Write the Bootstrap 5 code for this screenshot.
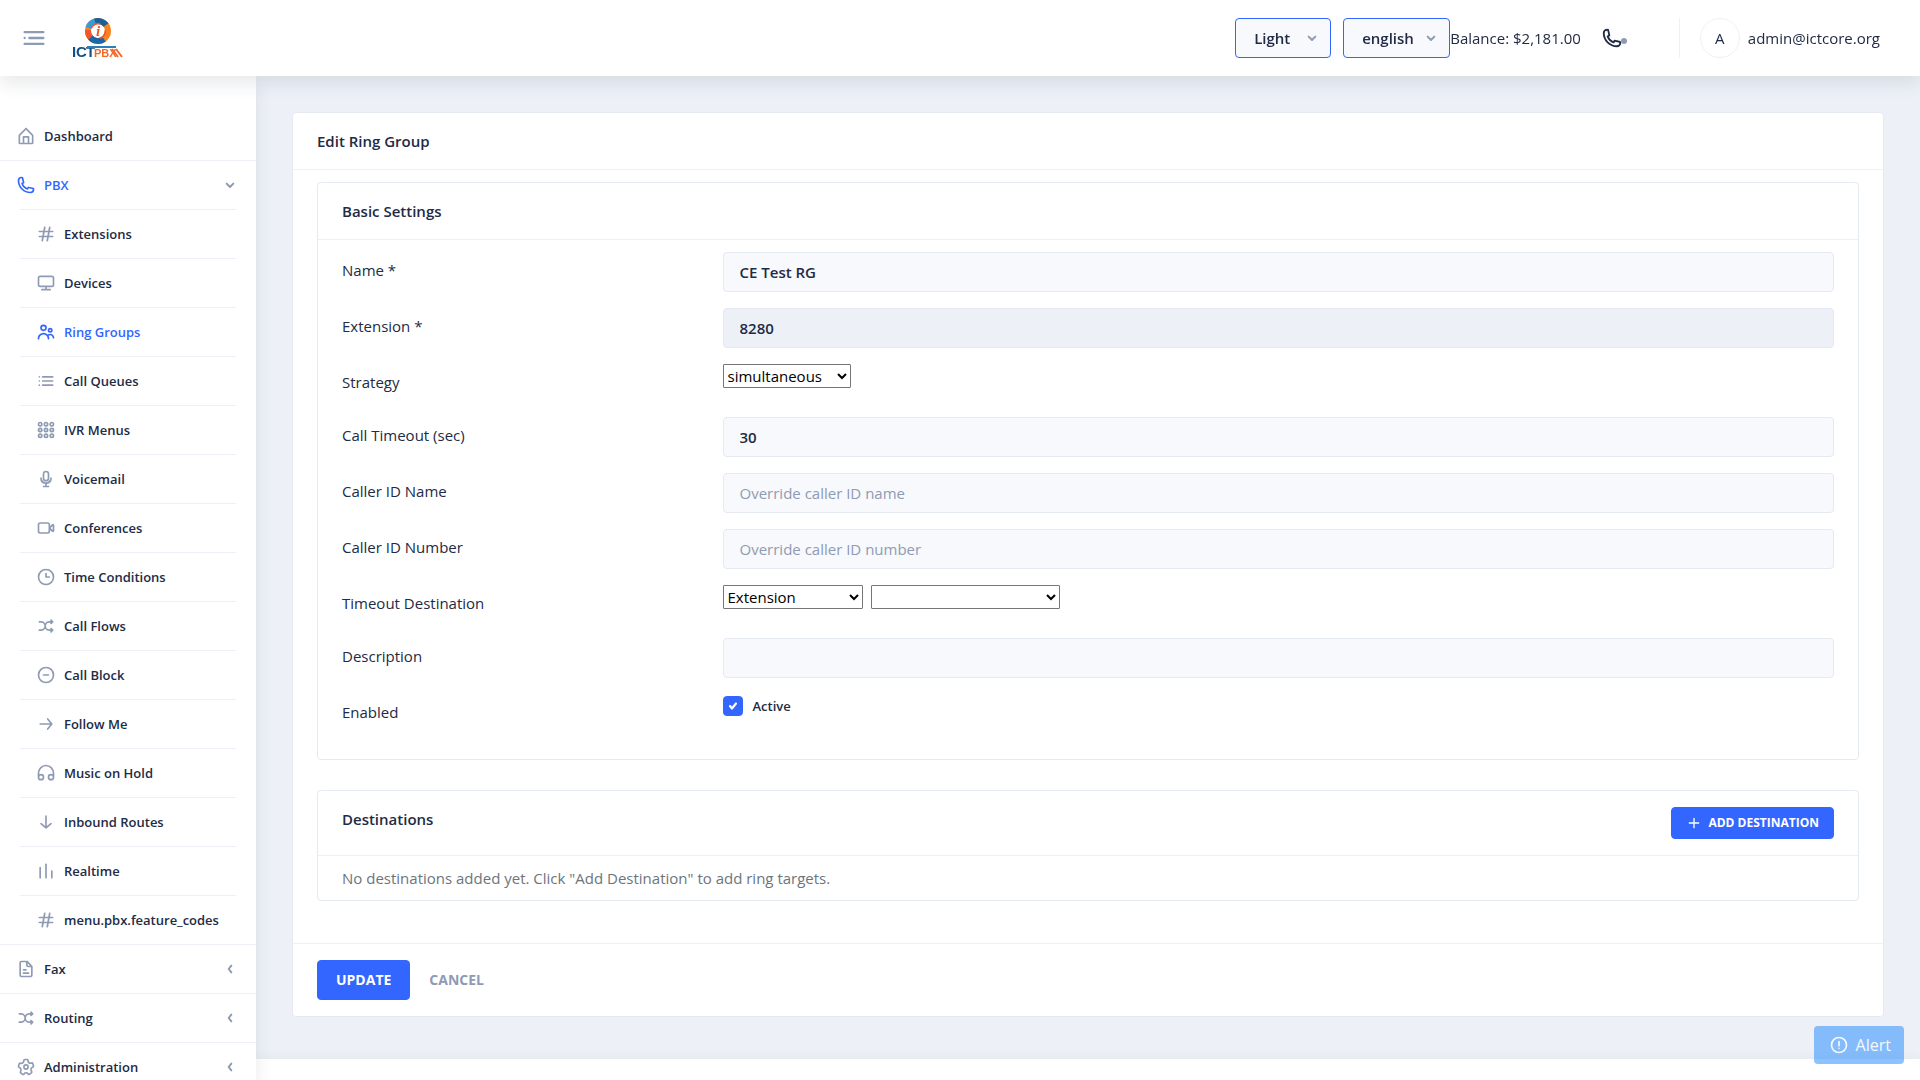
<!DOCTYPE html>
<html lang="en">
<head>
<meta charset="utf-8">
<meta name="viewport" content="width=device-width, initial-scale=1">
<title>ICTPBX - Edit Ring Group</title>
<link href="https://cdn.jsdelivr.net/npm/bootstrap@5.3.0/dist/css/bootstrap.min.css" rel="stylesheet">
<style>
:root{--ink:#222b45;--hint:#8f9bb3;--brand:#3366ff;--line:#edf1f7;--edge:#e4e9f2;--field:#f7f9fc}
body{font-family:"Open Sans","Noto Sans",sans-serif;font-size:15px;line-height:20px;color:var(--ink)}
a{text-decoration:none}
.ico{width:20px;height:20px;fill:currentColor;flex:none}
.ico-sm{width:16px;height:16px}
.ico-md{width:22px;height:22px}
.ico-lg{width:28px;height:28px}
.topbar{height:76px;padding:0 40px 0 20px;box-shadow:0 8px 16px 0 rgba(44,51,73,.1);z-index:10}
.plain-btn{border:0;background:none;padding:0;color:var(--hint);line-height:0}
.brand-logo{width:52px;height:44px;margin-left:24px}
.top-select{height:40px;width:auto;font-size:15px;font-weight:600;line-height:24px;color:var(--ink);border:1px solid var(--brand);border-radius:4px;padding:0 34px 0 18px;background-color:var(--field);background-size:16px 16px;background-position:right 10px center;
background-image:url("data:image/svg+xml,%3Csvg xmlns='http://www.w3.org/2000/svg' viewBox='0 0 24 24'%3E%3Cpath d='M7 10l5 5 5-5' fill='none' stroke='%238f9bb3' stroke-width='3' stroke-linecap='round' stroke-linejoin='round'/%3E%3C/svg%3E")}
.theme-select{width:96px}
.lang-select{width:107px}
.phone-btn{color:var(--ink);margin-left:20px}
.phone-dot{width:6px;height:6px;background:var(--hint);right:-4px;bottom:5px}
.user-box{height:40px;margin-left:56px;padding-left:20px;border-left:1px solid var(--line)}
.avatar{width:40px;height:40px;border:1px solid var(--line)}
.sidebar{width:256px;padding-top:36px;z-index:5;box-shadow:0 8px 16px 0 rgba(44,51,73,.1);scrollbar-width:none}
.side-menu li{border-bottom:1px solid var(--line)}
.side-menu li:last-child{border-bottom:0}
.side-menu a{display:flex;align-items:center;gap:8px;padding:12px 16px;font-size:13px;font-weight:600;line-height:24px;color:var(--ink)}
.side-menu a .ico{color:var(--hint)}
.side-menu a .ico-sm{margin-left:auto;margin-right:2px}
.side-menu a.current,.side-menu a.current .ico:first-child{color:var(--brand)}
.sub-menu{margin:0 20px;border-top:1px solid var(--line)}
.content-pane{background:#edf1f7;scrollbar-width:none}
.page-body{padding:36px 36px 42px}
.page-foot{height:84px;background:#fff;flex:none;box-shadow:0 -4px 8px 0 rgba(44,51,73,.03)}
.panel{border:1px solid var(--edge);border-radius:4px}
.panel>.card-header{background:none;border-bottom:1px solid var(--line);padding:16px 24px;font-weight:600;line-height:24px}
.panel>.card-body{padding:12px 24px}
.panel>.card-footer{background:none;border-top:1px solid var(--line);padding:16px 24px}
.inner-panel{margin-bottom:30px}
.form-line{--bs-gutter-x:30px;margin-bottom:16px}
.form-line .col-form-label{padding-top:7px;padding-bottom:7px;line-height:23px}
.field{height:40px;border:1px solid var(--edge);border-radius:4px;background:var(--field);padding:7px 16px;font-size:15px;font-weight:600;line-height:24px;color:var(--ink)}
.field::placeholder{color:var(--hint);font-weight:400;opacity:1}
.field:disabled{background:#edf1f7;color:var(--ink);opacity:1}
.plain-select{height:24px;font-size:15px;line-height:20px;color:#000;background:#fff;border:1px solid #767676;border-radius:1px;padding-right:5px;vertical-align:top}
.w-strategy{width:128px}
.w-kind{width:140px}
.w-target{width:189px}
.tick-line{padding-top:2px}
.tick{width:20px;height:20px;border-radius:3px;background-size:18px 18px}
.tick.form-check-input{margin:0}
.tick:checked{background-color:var(--brand);border-color:var(--brand);background-image:url("data:image/svg+xml,%3Csvg xmlns='http://www.w3.org/2000/svg' viewBox='0 0 18 18'%3E%3Cpath d='M6 9l2 2.500L12 6.500' fill='none' stroke='white' stroke-width='2.200' stroke-linecap='round' stroke-linejoin='round'/%3E%3C/svg%3E")}
.tick-text{font-size:13px;font-weight:600;padding-left:10px}
.btn-act{font-weight:700;border-radius:4px;text-transform:uppercase;border-width:1px}
.btn-main{--bs-btn-color:#fff;--bs-btn-bg:#3366ff;--bs-btn-border-color:#3366ff;--bs-btn-hover-color:#fff;--bs-btn-hover-bg:#598bff;--bs-btn-hover-border-color:#598bff}
.btn-mid{font-size:14px;line-height:16px;padding:11px 18px}
.btn-tiny{font-size:12px;line-height:16px;padding:7px 14px;gap:6px}
.btn-ghost{color:var(--hint)}
.muted-note{color:#6c757d}
.alert-btn{right:16px;bottom:16px;height:38px;font-size:16px;line-height:24px;padding:6px 13px 6px 15px;gap:7px;border:0;border-radius:4px;color:#fff;background:#1a86ff;opacity:.5;z-index:20}
</style>
<script src="https://cdn.jsdelivr.net/npm/bootstrap@5.3.0/dist/js/bootstrap.bundle.min.js"></script>
</head>
<body class="vh-100 d-flex flex-column overflow-hidden bg-white">

<svg class="d-none" xmlns="http://www.w3.org/2000/svg">
<symbol id="i-menu" viewBox="0 0 24 24"><circle cx="4" cy="12" r="1"/><rect x="7" y="11" width="14" height="2" rx=".94"/><rect x="3" y="16" width="18" height="2" rx=".94"/><rect x="3" y="6" width="18" height="2" rx=".94"/></symbol>
<symbol id="i-home" viewBox="0 0 24 24"><path d="M20.420 10.180L12.710 2.300a1 1 0 0 0-1.420 0l-7.710 7.890A2 2 0 0 0 3 11.620V20a2 2 0 0 0 1.890 2h14.220A2 2 0 0 0 21 20v-8.380a2.070 2.070 0 0 0-.58-1.440zM10 20v-6h4v6zm9 0h-3v-7a1 1 0 0 0-1-1H9a1 1 0 0 0-1 1v7H5v-8.420l7-7.150 7 7.190z"/></symbol>
<symbol id="i-phone" viewBox="0 0 24 24"><path d="M17.400 22A15.420 15.420 0 0 1 2 6.600 4.600 4.600 0 0 1 6.600 2a3.940 3.940 0 0 1 .77.070 3.790 3.790 0 0 1 .72.180 1 1 0 0 1 .65.750l1.370 6a1 1 0 0 1-.26.920c-.13.140-.14.150-1.370.790a9.910 9.910 0 0 0 4.870 4.890c.65-1.240.66-1.250.8-1.380a1 1 0 0 1 .92-.26l6 1.370a1 1 0 0 1 .72.650 4.340 4.340 0 0 1 .19.730 4.770 4.770 0 0 1 .06.760A4.600 4.600 0 0 1 17.400 22zM6.600 4A2.610 2.610 0 0 0 4 6.600 13.410 13.410 0 0 0 17.400 20a2.610 2.610 0 0 0 2.600-2.600v-.33L15.360 16l-.29.550c-.45.870-.78 1.500-1.620 1.160A11.850 11.850 0 0 1 6.310 10.560c-.36-.78.340-1.160 1.130-1.620L8 8.640 6.930 4z"/></symbol>
<symbol id="i-hash" viewBox="0 0 24 24"><path d="M20 14h-4.300l.73-4H20a1 1 0 0 0 0-2h-3.210l.69-3.810A1 1 0 0 0 16.640 3a1 1 0 0 0-1.220.820L14.670 8h-3.880l.69-3.810A1 1 0 0 0 10.640 3a1 1 0 0 0-1.220.820L8.670 8H4a1 1 0 0 0 0 2h4.300l-.73 4H4a1 1 0 0 0 0 2h3.210l-.69 3.810A1 1 0 0 0 7.360 21a1 1 0 0 0 1.220-.82L9.330 16h3.880l-.69 3.810a1 1 0 0 0 .84 1.190 1 1 0 0 0 1.220-.82l.75-4.180H20a1 1 0 0 0 0-2zM9.700 14l.73-4h3.870l-.73 4z"/></symbol>
<symbol id="i-monitor" viewBox="0 0 24 24"><path d="M19 3H5a3 3 0 0 0-3 3v8a3 3 0 0 0 3 3h6v2H7a1 1 0 0 0 0 2h10a1 1 0 0 0 0-2h-4v-2h6a3 3 0 0 0 3-3V6a3 3 0 0 0-3-3zm1 11a1 1 0 0 1-1 1H5a1 1 0 0 1-1-1V6a1 1 0 0 1 1-1h14a1 1 0 0 1 1 1z"/></symbol>
<symbol id="i-people" viewBox="0 0 24 24"><path d="M9 11a4 4 0 1 0-4-4 4 4 0 0 0 4 4zm0-6a2 2 0 1 1-2 2 2 2 0 0 1 2-2zM17 13a3 3 0 1 0-3-3 3 3 0 0 0 3 3zm0-4a1 1 0 1 1-1 1 1 1 0 0 1 1-1zM17 14a5 5 0 0 0-3.060 1.050A7 7 0 0 0 2 20a1 1 0 0 0 2 0 5 5 0 0 1 10 0 1 1 0 0 0 2 0 6.900 6.900 0 0 0-.86-3.350A3 3 0 0 1 20 19a1 1 0 0 0 2 0 5 5 0 0 0-5-5z"/></symbol>
<symbol id="i-list" viewBox="0 0 24 24"><circle cx="4" cy="7" r="1"/><circle cx="4" cy="12" r="1"/><circle cx="4" cy="17" r="1"/><rect x="7" y="11" width="14" height="2" rx=".94"/><rect x="7" y="16" width="14" height="2" rx=".94"/><rect x="7" y="6" width="14" height="2" rx=".94"/></symbol>
<symbol id="i-keypad" viewBox="0 0 24 24"><g fill="none" stroke="currentColor" stroke-width="2"><circle cx="5" cy="5" r="2"/><circle cx="12" cy="5" r="2"/><circle cx="19" cy="5" r="2"/><circle cx="5" cy="12" r="2"/><circle cx="12" cy="12" r="2"/><circle cx="19" cy="12" r="2"/><circle cx="5" cy="19" r="2"/><circle cx="12" cy="19" r="2"/><circle cx="19" cy="19" r="2"/></g></symbol>
<symbol id="i-mic" viewBox="0 0 24 24"><path d="M12 15a4 4 0 0 0 4-4V6a4 4 0 0 0-8 0v5a4 4 0 0 0 4 4zm-2-9a2 2 0 0 1 4 0v5a2 2 0 0 1-4 0zM19 11a1 1 0 0 0-2 0 5 5 0 0 1-10 0 1 1 0 0 0-2 0 7 7 0 0 0 6 6.920V20H8.890a.89.890 0 0 0-.89.890v.22a.89.890 0 0 0 .89.890h6.220a.89.890 0 0 0 .89-.89v-.22a.89.890 0 0 0-.89-.89H13v-2.080A7 7 0 0 0 19 11z"/></symbol>
<symbol id="i-video" viewBox="0 0 24 24"><path d="M21 7.150a1.700 1.700 0 0 0-1.850.3l-2.150 2V8a3 3 0 0 0-3-3H5a3 3 0 0 0-3 3v8a3 3 0 0 0 3 3h9a3 3 0 0 0 3-3v-1.450l2.160 2a1.740 1.740 0 0 0 1.160.45 1.680 1.680 0 0 0 .69-.15 1.600 1.600 0 0 0 1-1.480V8.630A1.600 1.600 0 0 0 21 7.150zM15 16a1 1 0 0 1-1 1H5a1 1 0 0 1-1-1V8a1 1 0 0 1 1-1h9a1 1 0 0 1 1 1zm5-1.750L17.520 12 20 9.750z"/></symbol>
<symbol id="i-clock" viewBox="0 0 24 24"><circle cx="12" cy="12" r="9" fill="none" stroke="currentColor" stroke-width="2"/><path d="M16 11h-3V8a1 1 0 0 0-2 0v4a1 1 0 0 0 1 1h4a1 1 0 0 0 0-2z"/></symbol>
<symbol id="i-shuffle" viewBox="0 0 24 24"><path d="M18.710 14.290a1 1 0 0 0-1.420 1.420l.29.290H16a4 4 0 0 1 0-8h1.590l-.3.290a1 1 0 0 0 0 1.420A1 1 0 0 0 18 10a1 1 0 0 0 .71-.29l2-2A1 1 0 0 0 21 7a1 1 0 0 0-.29-.71l-2-2a1 1 0 0 0-1.420 1.420l.29.290H16a6 6 0 0 0-5 2.690A6 6 0 0 0 6 6H4a1 1 0 0 0 0 2h2a4 4 0 0 1 0 8H4a1 1 0 0 0 0 2h2a6 6 0 0 0 5-2.690A6 6 0 0 0 16 18h1.590l-.3.290a1 1 0 0 0 0 1.420A1 1 0 0 0 18 20a1 1 0 0 0 .71-.29l2-2A1 1 0 0 0 21 17a1 1 0 0 0-.29-.71z"/></symbol>
<symbol id="i-minus" viewBox="0 0 24 24"><circle cx="12" cy="12" r="9" fill="none" stroke="currentColor" stroke-width="2"/><rect x="8" y="11" width="8" height="2" rx="1"/></symbol>
<symbol id="i-forward" viewBox="0 0 24 24"><path d="M5 13h11.860l-3.630 4.360a1 1 0 0 0 1.540 1.280l5-6a1 1 0 0 0 0-1.280l-5-6a1 1 0 0 0-1.540 1.280L16.860 11H5a1 1 0 0 0 0 2z"/></symbol>
<symbol id="i-down" viewBox="0 0 24 24"><path transform="rotate(90 12 12)" d="M5 13h11.860l-3.630 4.360a1 1 0 0 0 1.540 1.280l5-6a1 1 0 0 0 0-1.280l-5-6a1 1 0 0 0-1.540 1.280L16.860 11H5a1 1 0 0 0 0 2z"/></symbol>
<symbol id="i-headphones" viewBox="0 0 24 24"><path d="M12 2A10.200 10.200 0 0 0 2 12.370V17a4 4 0 1 0 4-4 3.910 3.910 0 0 0-2 .56v-1.190A8.200 8.200 0 0 1 12 4a8.200 8.200 0 0 1 8 8.370v1.190a3.910 3.910 0 0 0-2-.56 4 4 0 1 0 4 4v-4.630A10.200 10.200 0 0 0 12 2zM6 15a2 2 0 1 1-2 2 2 2 0 0 1 2-2zm12 4a2 2 0 1 1 2-2 2 2 0 0 1-2 2z"/></symbol>
<symbol id="i-bars" viewBox="0 0 24 24"><rect x="11" y="3" width="2" height="18" rx="1"/><rect x="18" y="11" width="2" height="10" rx="1"/><rect x="4" y="7" width="2" height="14" rx="1"/></symbol>
<symbol id="i-file" viewBox="0 0 24 24"><path d="M15 16H9a1 1 0 0 0 0 2h6a1 1 0 0 0 0-2zM9 14h3a1 1 0 0 0 0-2H9a1 1 0 0 0 0 2zM19.740 8.330l-5.440-6a1 1 0 0 0-.74-.33h-7A2.530 2.530 0 0 0 4 4.500v15A2.530 2.530 0 0 0 6.560 22h10.880A2.530 2.530 0 0 0 20 19.500V9a1 1 0 0 0-.26-.67zM14 5l2.740 3h-2a.79.790 0 0 1-.74-.85zm3.440 15H6.560a.53.530 0 0 1-.56-.5v-15a.53.530 0 0 1 .56-.5H12v3.150A2.790 2.790 0 0 0 14.710 10H18v9.500a.53.530 0 0 1-.56.500z"/></symbol>
<symbol id="i-gear" viewBox="0 0 24 24"><path fill-rule="evenodd" d="M8.610 22a2.250 2.250 0 0 1-1.350-.46L5.190 20a2.370 2.370 0 0 1-.49-3.220 2.060 2.060 0 0 0 .23-1.860l-.06-.16a1.830 1.830 0 0 0-1.120-1.220h-.16a2.340 2.340 0 0 1-1.480-2.940L2.930 8a2.180 2.180 0 0 1 1.120-1.410 2.140 2.140 0 0 1 1.680-.12 1.930 1.930 0 0 0 1.780-.29l.13-.1a1.940 1.940 0 0 0 .73-1.510v-.24A2.320 2.320 0 0 1 10.660 2h2.550a2.260 2.260 0 0 1 1.600.67 2.370 2.370 0 0 1 .68 1.680v.28a1.760 1.760 0 0 0 .69 1.430l.11.080a1.740 1.740 0 0 0 1.590.26l.34-.11A2.260 2.260 0 0 1 21.100 7.800l.79 2.520a2.360 2.360 0 0 1-1.460 2.930l-.2.070A1.890 1.890 0 0 0 19 14.600a2 2 0 0 0 .25 1.650l.26.380a2.380 2.380 0 0 1-.5 3.230L17 21.410a2.240 2.240 0 0 1-3.220-.53l-.12-.17a1.750 1.750 0 0 0-1.500-.78 1.800 1.800 0 0 0-1.430.77l-.23.330A2.250 2.250 0 0 1 9 22a2 2 0 0 1-.39 0zM4.400 11.620a3.830 3.830 0 0 1 2.380 2.500v.12a4 4 0 0 1-.46 3.620.38.380 0 0 0 0 .51L8.470 20a.25.250 0 0 0 .37-.07l.23-.33a3.770 3.770 0 0 1 6.200 0l.12.180a.3.300 0 0 0 .18.120.25.250 0 0 0 .19-.05l2.060-1.560a.36.360 0 0 0 .07-.49l-.26-.38A4 4 0 0 1 17.100 14a3.920 3.920 0 0 1 2.490-2.610l.2-.07a.34.340 0 0 0 .19-.44l-.78-2.490a.35.350 0 0 0-.2-.19.21.210 0 0 0-.19 0l-.34.110a3.740 3.740 0 0 1-3.430-.57L15 7.650a3.760 3.760 0 0 1-1.490-3v-.31a.37.370 0 0 0-.1-.26.31.310 0 0 0-.21-.08h-2.540a.31.310 0 0 0-.29.330v.25a3.900 3.900 0 0 1-1.520 3.090l-.13.100a3.910 3.910 0 0 1-3.630.59.220.22 0 0 0-.14 0 .28.280 0 0 0-.12.150L4 11.120a.36.360 0 0 0 .22.450z"/><circle cx="12" cy="12" r="2.500" fill="none" stroke="currentColor" stroke-width="2"/></symbol>
<symbol id="i-chev-down" viewBox="0 0 24 24"><path d="M7 10l5 5 5-5" fill="none" stroke="currentColor" stroke-width="3" stroke-linecap="round" stroke-linejoin="round"/></symbol>
<symbol id="i-chev-left" viewBox="0 0 24 24"><path d="M14 7l-4 5 4 5" fill="none" stroke="currentColor" stroke-width="3" stroke-linecap="round" stroke-linejoin="round"/></symbol>
<symbol id="i-plus" viewBox="0 0 24 24"><path d="M12 5v14M5 12h14" fill="none" stroke="currentColor" stroke-width="2" stroke-linecap="round"/></symbol>
<symbol id="i-alert" viewBox="0 0 24 24"><circle cx="12" cy="12" r="9" fill="none" stroke="currentColor" stroke-width="2"/><circle cx="12" cy="16" r="1"/><rect x="11" y="7" width="2" height="7" rx="1"/></symbol>
</svg>

<header class="topbar d-flex align-items-center bg-white position-relative flex-shrink-0">
  <button class="plain-btn" type="button" aria-label="Toggle sidebar"><svg class="ico ico-lg"><use href="#i-menu"/></svg></button>
  <a href="#" aria-label="ICTPBX" class="lh-1">
    <svg class="brand-logo" viewBox="0 0 52 44">
      <g fill="none" stroke-width="6">
        <circle cx="26" cy="15" r="10" stroke="#f9821e"/>
        <path d="M16.500 12A10 10 0 0 1 24 5.200" stroke="#3a9bd4"/>
        <path d="M23 5.500A10 10 0 0 1 34 9" stroke="#17609c"/>
        <path d="M32 23A10 10 0 0 1 18 21" stroke="#1c68a6"/>
        <path d="M18.500 21.500A10 10 0 0 1 16 14" stroke="#f0562a"/>
        <path d="M20 12a7 7 0 0 1 8-4" stroke="#f0562a" stroke-width="2"/>
        <path d="M33 14a7 7 0 0 1-5 8" stroke="#f0562a" stroke-width="2"/>
      </g>
      <circle cx="26" cy="15" r="6.500" fill="#fff"/>
      <text x="26" y="20" text-anchor="middle" font-family="Liberation Serif,serif" font-style="italic" font-weight="700" font-size="15" fill="#f0562a">i</text>
      <text x="0 4 14" y="41" font-family="Liberation Sans,sans-serif" font-weight="700" font-size="15" fill="#12508a">ICT</text>
      <path d="M15 30h29v2h-29z" fill="#2b7fba"/>
      <text x="22" y="41" font-family="Liberation Sans,sans-serif" font-weight="700" font-size="11" fill="#f4692a">PBX</text>
      <path d="M40 33l6 8M44 33l6 8" stroke="#f4692a" stroke-width="2"/>
    </svg>
  </a>
  <div class="d-flex align-items-center ms-auto">
    <select class="form-select top-select theme-select me-2" aria-label="Theme"><option>Light</option><option>Dark</option></select>
    <select class="form-select top-select lang-select ms-1" aria-label="Language"><option>english</option></select>
    <span>Balance: $2,181.00</span>
    <button class="plain-btn phone-btn position-relative" type="button" aria-label="Phone"><svg class="ico ico-md"><use href="#i-phone"/></svg><span class="phone-dot position-absolute rounded-circle"></span></button>
    <div class="user-box d-flex align-items-center gap-2">
      <span class="avatar rounded-circle d-flex align-items-center justify-content-center">A</span>
      <span>admin@ictcore.org</span>
    </div>
  </div>
</header>

<div class="d-flex flex-grow-1 overflow-hidden">
  <nav class="sidebar bg-white flex-shrink-0 overflow-auto position-relative" aria-label="Main menu">
    <ul class="side-menu list-unstyled mb-0">
      <li><a href="#"><svg class="ico"><use href="#i-home"/></svg>Dashboard</a></li>
      <li><a href="#" class="current"><svg class="ico"><use href="#i-phone"/></svg>PBX<svg class="ico ico-sm"><use href="#i-chev-down"/></svg></a>
        <ul class="sub-menu list-unstyled">
          <li><a href="#"><svg class="ico"><use href="#i-hash"/></svg>Extensions</a></li>
          <li><a href="#"><svg class="ico"><use href="#i-monitor"/></svg>Devices</a></li>
          <li><a href="#" class="current"><svg class="ico"><use href="#i-people"/></svg>Ring Groups</a></li>
          <li><a href="#"><svg class="ico"><use href="#i-list"/></svg>Call Queues</a></li>
          <li><a href="#"><svg class="ico"><use href="#i-keypad"/></svg>IVR Menus</a></li>
          <li><a href="#"><svg class="ico"><use href="#i-mic"/></svg>Voicemail</a></li>
          <li><a href="#"><svg class="ico"><use href="#i-video"/></svg>Conferences</a></li>
          <li><a href="#"><svg class="ico"><use href="#i-clock"/></svg>Time Conditions</a></li>
          <li><a href="#"><svg class="ico"><use href="#i-shuffle"/></svg>Call Flows</a></li>
          <li><a href="#"><svg class="ico"><use href="#i-minus"/></svg>Call Block</a></li>
          <li><a href="#"><svg class="ico"><use href="#i-forward"/></svg>Follow Me</a></li>
          <li><a href="#"><svg class="ico"><use href="#i-headphones"/></svg>Music on Hold</a></li>
          <li><a href="#"><svg class="ico"><use href="#i-down"/></svg>Inbound Routes</a></li>
          <li><a href="#"><svg class="ico"><use href="#i-bars"/></svg>Realtime</a></li>
          <li><a href="#"><svg class="ico"><use href="#i-hash"/></svg>menu.pbx.feature_codes</a></li>
        </ul>
      </li>
      <li><a href="#"><svg class="ico"><use href="#i-file"/></svg>Fax<svg class="ico ico-sm"><use href="#i-chev-left"/></svg></a></li>
      <li><a href="#"><svg class="ico"><use href="#i-shuffle"/></svg>Routing<svg class="ico ico-sm"><use href="#i-chev-left"/></svg></a></li>
      <li><a href="#"><svg class="ico"><use href="#i-gear"/></svg>Administration<svg class="ico ico-sm"><use href="#i-chev-left"/></svg></a></li>
    </ul>
  </nav>

  <div class="content-pane flex-grow-1 overflow-auto d-flex flex-column">
    <main class="page-body flex-shrink-0">
      <form class="card panel">
        <div class="card-header">Edit Ring Group</div>
        <div class="card-body">
          <section class="card panel inner-panel">
            <div class="card-header">Basic Settings</div>
            <div class="card-body">
              <div class="row form-line"><label class="col-sm-3 col-form-label" for="rg-name">Name *</label><div class="col-sm-9"><input class="form-control field" id="rg-name" type="text" value="CE Test RG"></div></div>
              <div class="row form-line"><label class="col-sm-3 col-form-label" for="rg-ext">Extension *</label><div class="col-sm-9"><input class="form-control field" id="rg-ext" type="text" value="8280" disabled></div></div>
              <div class="row form-line"><label class="col-sm-3 col-form-label" for="rg-strategy">Strategy</label><div class="col-sm-9"><select class="plain-select w-strategy" id="rg-strategy"><option>simultaneous</option></select></div></div>
              <div class="row form-line"><label class="col-sm-3 col-form-label" for="rg-timeout">Call Timeout (sec)</label><div class="col-sm-9"><input class="form-control field" id="rg-timeout" type="text" value="30"></div></div>
              <div class="row form-line"><label class="col-sm-3 col-form-label" for="rg-cidname">Caller ID Name</label><div class="col-sm-9"><input class="form-control field" id="rg-cidname" type="text" placeholder="Override caller ID name"></div></div>
              <div class="row form-line"><label class="col-sm-3 col-form-label" for="rg-cidnum">Caller ID Number</label><div class="col-sm-9"><input class="form-control field" id="rg-cidnum" type="text" placeholder="Override caller ID number"></div></div>
              <div class="row form-line"><label class="col-sm-3 col-form-label" for="rg-dest">Timeout Destination</label><div class="col-sm-9 d-flex align-items-start gap-2"><select class="plain-select w-kind" id="rg-dest"><option>Extension</option></select><select class="plain-select w-target" aria-label="Timeout target"><option></option></select></div></div>
              <div class="row form-line"><label class="col-sm-3 col-form-label" for="rg-desc">Description</label><div class="col-sm-9"><input class="form-control field" id="rg-desc" type="text"></div></div>
              <div class="row form-line"><span class="col-sm-3 col-form-label">Enabled</span><div class="col-sm-9"><div class="tick-line d-flex align-items-center"><input class="form-check-input tick" id="rg-active" type="checkbox" checked><label class="tick-text" for="rg-active">Active</label></div></div></div>
            </div>
          </section>

          <section class="card panel inner-panel">
            <div class="card-header d-flex justify-content-between align-items-start">Destinations
              <button class="btn btn-act btn-main btn-tiny d-flex align-items-center" type="button"><svg class="ico ico-sm"><use href="#i-plus"/></svg>Add Destination</button>
            </div>
            <div class="card-body muted-note">No destinations added yet. Click "Add Destination" to add ring targets.</div>
          </section>
        </div>
        <div class="card-footer d-flex">
          <button class="btn btn-act btn-main btn-mid" type="submit">Update</button>
          <button class="btn btn-act btn-ghost btn-mid" type="button">Cancel</button>
        </div>
      </form>
    </main>
    <footer class="page-foot"></footer>
  </div>
</div>

<button class="alert-btn position-fixed d-flex align-items-center" type="button"><svg class="ico"><use href="#i-alert"/></svg>Alert</button>
</body>
</html>
